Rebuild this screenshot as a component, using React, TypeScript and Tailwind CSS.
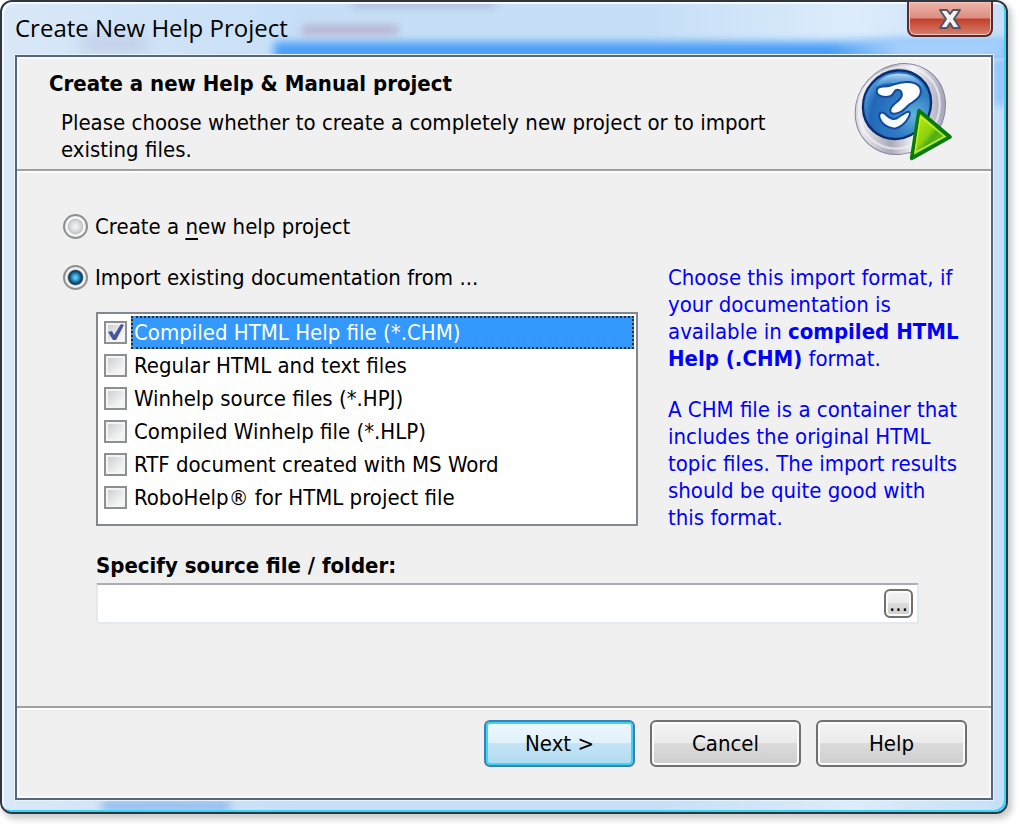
import React, { useState } from "react";

const formats = [
  "Compiled HTML Help file (*.CHM)",
  "Regular HTML and text files",
  "Winhelp source files (*.HPJ)",
  "Compiled Winhelp file (*.HLP)",
  "RTF document created with MS Word",
  "RoboHelp® for HTML project file",
];

function HelpProjectIcon() {
  return (
    <svg viewBox="40 20 300 300" className="w-[100px] h-[100px] shrink-0" aria-hidden="true">
      <defs>
        <linearGradient id="ring" x1="0" y1="0" x2="1" y2="1">
          <stop offset="0" stopColor="#8f93a3" />
          <stop offset="0.2" stopColor="#e9e9f0" />
          <stop offset="0.42" stopColor="#a9aab8" />
          <stop offset="0.6" stopColor="#f2f2f6" />
          <stop offset="0.8" stopColor="#b4b4c4" />
          <stop offset="1" stopColor="#77749a" />
        </linearGradient>
        <radialGradient id="disc" cx="0.55" cy="0.8" r="0.8">
          <stop offset="0" stopColor="#62b4dc" />
          <stop offset="0.4" stopColor="#2f7cc4" />
          <stop offset="0.8" stopColor="#2368b8" />
          <stop offset="1" stopColor="#4d9be0" />
        </radialGradient>
        <linearGradient id="gloss" x1="0" y1="0" x2="0" y2="1">
          <stop offset="0" stopColor="#b5e0fb" />
          <stop offset="1" stopColor="#4f9fe0" stopOpacity="0" />
        </linearGradient>
        <linearGradient id="arrow" x1="0" y1="0" x2="1" y2="1">
          <stop offset="0" stopColor="#c8ee10" />
          <stop offset="0.45" stopColor="#8fd20c" />
          <stop offset="0.55" stopColor="#4fae18" />
          <stop offset="1" stopColor="#8ed61a" />
        </linearGradient>
      </defs>
      <ellipse cx="182" cy="161" rx="142" ry="130" transform="rotate(-48 182 161)" fill="url(#ring)" stroke="#8583a0" strokeWidth="3" />
      <ellipse cx="179" cy="157" rx="127" ry="117" transform="rotate(-48 179 157)" fill="none" stroke="#f4f4f8" strokeWidth="7" opacity="0.65" />
      <ellipse cx="172" cy="148" rx="106" ry="99" transform="rotate(-48 172 148)" fill="url(#disc)" stroke="#0b2c6c" strokeWidth="7" />
      <path d="M105 93 C125 58 165 50 200 56 C232 64 253 85 259 112 C220 80 150 75 105 93 Z" fill="url(#gloss)" />
      <path
        d="M111 108 C110 94 126 93 143 93 C160 91 172 79 203 80 C232 81 246 93 243 113 C240 132 221 138 208 148 C197 157 193 167 178 172 C162 177 151 176 152 165 C152 151 168 144 178 134 C191 122 189 105 174 103 C160 103 166 118 151 123 C132 128 112 122 111 108 Z"
        fill="#ffffff"
        stroke="#124a9c"
        strokeWidth="6"
      />
      <path
        d="M119 179 C121 169 131 169 140 179 C149 189 164 196 176 186 C186 178 192 176 202 170 C212 166 213 176 207 186 C199 201 189 214 166 220 C148 218 137 213 128 202 C122 194 117 188 119 179 Z"
        fill="#f4faff"
        stroke="#124a9c"
        strokeWidth="6"
      />
      <path d="M238 166 L331 245 L216 309 Z" fill="url(#arrow)" stroke="#077a0e" strokeWidth="11" strokeLinejoin="round" />
      <path d="M242 184 L315 243 L226 292 Z" fill="none" stroke="#c9f02c" strokeWidth="4" />
    </svg>
  );
}

function CloseButton() {
  return (
    <button
      aria-label="Close"
      className="w-[86px] h-[35px] flex items-center justify-center rounded-b-lg border-2 border-t-0 border-[#5a2a2e] bg-[linear-gradient(#eeb4a8,#dc8f82_48%,#c2402a_52%,#d8806c)] shadow-[inset_0_0_0_1px_#f3c6bd]"
    >
      <svg viewBox="0 0 24 20" className="w-6 h-5" aria-hidden="true">
        <path
          d="M2 1 H9 L12 5 L15 1 H22 L16 10 L22 19 H15 L12 14 L9 19 H2 L8 10 Z"
          fill="#f4f4f4"
          stroke="#535666"
          strokeWidth="2"
          strokeLinejoin="round"
        />
      </svg>
    </button>
  );
}

interface RadioProps {
  checked: boolean;
  onChange: () => void;
  children: React.ReactNode;
}

function Radio({ checked, onChange, children }: RadioProps) {
  return (
    <label className="flex items-center gap-[7px] leading-[27px]">
      <input
        type="radio"
        name="mode"
        checked={checked}
        onChange={onChange}
        className="appearance-none w-[25px] h-[25px] rounded-full border-2 border-[#8e8f8f] bg-[radial-gradient(circle,#f0f0f0_0_10%,#cdd1d5_42%,#b9bdc1_48%,#f4f4f4_54%)] checked:bg-[radial-gradient(circle,#5cc8f0_0_8%,#1c7fb4_28%,#0d2f4d_46%,#f0f0f0_56%)]"
      />
      <span>{children}</span>
    </label>
  );
}

interface FormatRowProps {
  name: string;
  selected: boolean;
  onSelect: () => void;
}

function FormatRow({ name, selected, onSelect }: FormatRowProps) {
  return (
    <label className="flex items-center gap-1 h-[33px]">
      <span className="relative w-[23px] h-[23px]">
        <input
          type="checkbox"
          checked={selected}
          onChange={onSelect}
          className="appearance-none block w-[23px] h-[23px] border-2 border-[#8e8f8f] bg-[linear-gradient(135deg,#c6cace,#f4f4f4_75%)] shadow-[inset_0_0_0_2px_#f4f4f4]"
        />
        {selected && (
          <svg viewBox="0 0 23 23" className="absolute inset-0 pointer-events-none" aria-hidden="true">
            <path d="M4 11 L8 10 L10 14 L17 3 L20 4 L12 19 L9 19 Z" fill="#46569c" />
          </svg>
        )}
      </span>
      <span
        className={
          selected
            ? "flex-1 h-[33px] leading-[29px] px-px border-2 border-dotted border-[#3a2a10] bg-[#3399ff] text-white"
            : "flex-1 h-[33px] leading-[33px] px-[3px]"
        }
      >
        {name}
      </span>
    </label>
  );
}

const pushButton =
  "h-[47px] w-[151px] rounded-md border-2 border-[#707070] bg-[linear-gradient(#f3f3f3,#ebebeb_48%,#dbdbdb_50%,#cdcdcd)] shadow-[inset_0_0_0_2px_#fafafa]";

const defaultButton =
  "h-[47px] w-[151px] rounded-md border-2 border-[#3c7fb1] bg-[linear-gradient(#eef7fd,#e0f1fb_48%,#c5e4f5_50%,#aedbf0)] shadow-[inset_0_0_0_2px_#3fd3f8]";

export default function App() {
  const [mode, setMode] = useState("import");
  const [format, setFormat] = useState(formats[0]);

  return (
    <div className="bg-white pr-3 pb-[13px] text-black text-[22px] [font-family:'DejaVu_Sans_Condensed','Noto_Sans',sans-serif]">
      <div className="relative overflow-hidden rounded-xl border-2 border-[#2f3640] bg-[linear-gradient(90deg,#d9e8f8,#c6dff7_30%,#c6dff7_65%,#dcecfb_85%,#c6dff7)] px-[13px] pb-3 shadow-[3px_4px_6px_1px_#cccccc]">
        {/* Blurred desktop seen through the glass frame */}
        <div className="absolute inset-x-0 top-0 h-14 overflow-hidden" aria-hidden="true">
          <div className="absolute left-[272px] right-0 top-[40px] h-5 bg-[#4b9ff8] blur-xs" />
          <div className="absolute right-0 top-9 w-44 h-6 bg-[linear-gradient(90deg,transparent,#a5cffb_40%)] blur-xs" />
          <div className="absolute left-[300px] top-6 w-24 h-2 bg-[#b3a9c6] blur-xs" />
          <div className="absolute left-[350px] top-0 w-36 h-1 bg-[#9a9cc8] blur-xs" />
          <div className="absolute left-[80px] top-9 w-16 h-3 bg-[#b9c6e0] blur-sm" />
        </div>
        <div className="absolute right-0 top-14 w-3 h-12 bg-[#8fc0fa] blur-xs" aria-hidden="true" />
        <div className="absolute left-[100px] bottom-0 w-32 h-3 bg-[#94bdf0] blur-xs" aria-hidden="true" />
        <div className="absolute inset-0 rounded-[10px] pointer-events-none shadow-[inset_2px_2px_0_#f4faff,inset_-2px_-2px_0_#35d5f5]" />

        <header className="relative flex items-start justify-between h-[53px]">
          <h1 className="pt-2 leading-9 text-[24px] [font-family:'Open_Sans','Noto_Sans',sans-serif]">Create New Help Project</h1>
          <CloseButton />
        </header>

        <main className="relative border-2 border-[#56677c] bg-[#f0f0f0] shadow-[0_0_0_1px_#e8f3fd,inset_0_0_0_2px_#fafafa]">
          <section className="flex justify-between items-start pl-8 pr-[38px] pt-[5px] h-[114px] border-b-2 border-[#a0a0a0]">
            <div className="pt-2">
              <h2 className="font-bold leading-[27px]">Create a new Help &amp; Manual project</h2>
              <p className="pt-3 pl-3 leading-[27px]">
                Please choose whether to create a completely new project or to import
                <br />
                existing files.
              </p>
            </div>
            <HelpProjectIcon />
          </section>

          <section className="border-t-2 border-white pl-[46px] pr-[30px] pt-10 pb-[82px]">
            <Radio checked={mode === "new"} onChange={() => setMode("new")}>
              Create a <u className="underline-offset-4">n</u>ew help project
            </Radio>

            <div className="flex gap-[30px] pt-6">
              <div className="w-[575px]">
                <Radio checked={mode === "import"} onChange={() => setMode("import")}>
                  Import existing documentation from ...
                </Radio>
                <div className="mt-[21px] ml-[33px] border-2 border-[#828790] bg-white pl-[6px] pr-0.5 pt-0.5 pb-[10px]">
                  {formats.map((name) => (
                    <FormatRow key={name} name={name} selected={name === format} onSelect={() => setFormat(name)} />
                  ))}
                </div>
              </div>

              <div className="flex-1 text-[#0000ff] leading-[27px] whitespace-nowrap">
                <p>
                  Choose this import format, if
                  <br />
                  your documentation is
                  <br />
                  available in <b>compiled HTML</b>
                  <br />
                  <b>Help (.CHM)</b> format.
                </p>
                <p className="pt-6">
                  A CHM file is a container that
                  <br />
                  includes the original HTML
                  <br />
                  topic files. The import results
                  <br />
                  should be quite good with
                  <br />
                  this format.
                </p>
              </div>
            </div>

            <div className="pt-[21px] pl-[33px] pr-[42px]">
              <label htmlFor="source" className="block font-bold leading-[27px]">
                Specify source file / folder:
              </label>
              <div className="mt-1 flex items-center h-[41px] pr-1 rounded-xs border-2 border-[#e3e9ef] border-t-[#abadb3] bg-white">
                <input id="source" type="text" className="flex-1 h-full px-2 outline-none" />
                <button
                  aria-label="Browse"
                  className="w-[29px] h-[29px] flex items-end justify-center rounded-md border-2 border-[#707070] bg-[linear-gradient(#f3f3f3,#ebebeb_48%,#dbdbdb_50%,#cdcdcd)] shadow-[inset_0_0_0_2px_#fafafa] leading-6"
                >
                  ...
                </button>
              </div>
            </div>
          </section>

          <footer className="border-t-2 border-[#a0a0a0]">
            <div className="flex justify-end gap-[15px] border-t-2 border-white pt-[10px] pr-6 pb-[31px]">
              <button className={defaultButton}>Next &gt;</button>
              <button className={pushButton}>Cancel</button>
              <button className={pushButton}>Help</button>
            </div>
          </footer>
        </main>
      </div>
    </div>
  );
}
